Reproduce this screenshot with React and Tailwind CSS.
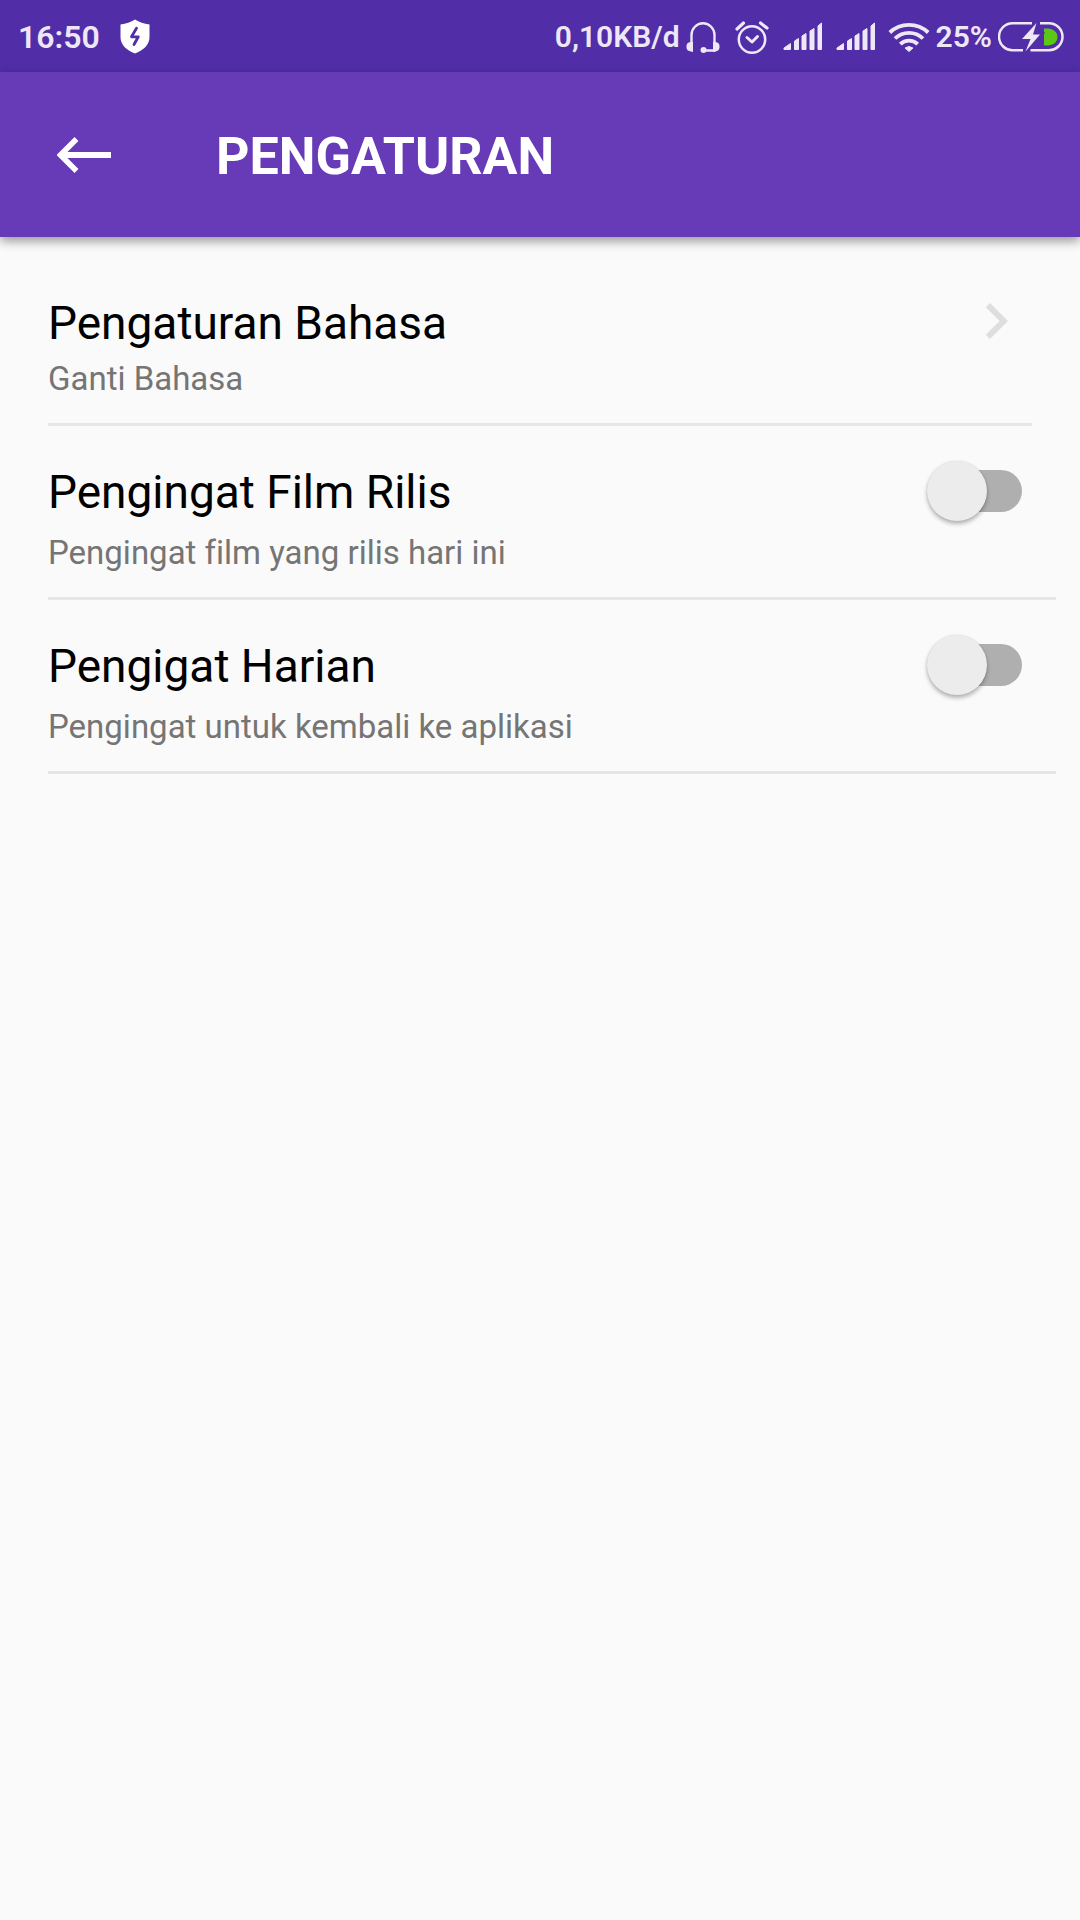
import { useState } from "react";

const ink = "#ede7f6";

function ShieldIcon() {
  return (
    <svg className="ml-5 h-9 w-[30px]" viewBox="0 0 30 36" aria-hidden="true">
      <path d="M15 .5C19 3 24 5 29.500 5.500V18c0 8-6.500 13.500-14.500 16.500C7 31.500.5 26 .5 18V5.500C6 5 11 3 15 .5z" fill="#fff" />
      <path d="M16.500 9.200l-5 8.600h6.800l-4.300 7.700" fill="none" stroke="#512da8" strokeWidth="2.800" strokeLinecap="round" strokeLinejoin="round" />
    </svg>
  );
}

function HeadsetIcon() {
  return (
    <svg className="ml-1.5 h-9 w-[34px]" viewBox="0 0 34 36" aria-hidden="true">
      <path d="M5.500 32V16a11.500 11.700 0 0 1 23 0v15.500H18" fill="none" stroke={ink} strokeWidth="2.400" />
      <path d="M7 23v10L4 32.200Q.5 31.500.5 28.500V27q0-3.500 4-4zM27 23v10l3-.8q3.500-.7 3.500-3.700V27q0-3.500-4-4z" fill={ink} />
      <circle cx="17.500" cy="31" r="3" fill={ink} />
    </svg>
  );
}

function AlarmIcon() {
  return (
    <svg className="ml-[15px] h-9 w-[34px]" viewBox="0 0 34 36" aria-hidden="true" fill="none" stroke={ink} strokeLinecap="round">
      <circle cx="17" cy="20.500" r="13.200" strokeWidth="2.500" />
      <path d="M12 18.500l5 4.500 5.500-5.500" strokeWidth="3" strokeLinejoin="round" />
      <path d="M2 10l6.500-6M32 9l-6.500-5" strokeWidth="3.200" />
    </svg>
  );
}

function SignalIcon({ className }) {
  return (
    <svg className={className} viewBox="0 0 40 36" aria-hidden="true" fill={ink} stroke={ink} strokeWidth="1" strokeLinejoin="round">
      <path d="M1 30.500V29l6.500-4.500v6zM11.500 30.500V22l4-2.500v11zM19 30.500V17l4-2.500v16zM27 30.500V12l4-2.500v21zM35 30.500V7l3.500-3v26.500z" />
    </svg>
  );
}

function WifiIcon() {
  return (
    <svg className="ml-3 h-9 w-[42px]" viewBox="0 0 42 36" aria-hidden="true" fill="none" stroke={ink} strokeWidth="3.800">
      <path d="M1.800 13.500a28 28 0 0 1 38.400 0" />
      <path d="M7 19.500a20 20 0 0 1 28 0" />
      <path d="M12.300 25.200a12.500 12.500 0 0 1 17.400 0" />
      <path d="M17 29q4-3 8 0l-4 3.500z" fill={ink} stroke={ink} strokeWidth="1" strokeLinejoin="round" />
    </svg>
  );
}

function BatteryIcon() {
  return (
    <svg className="ml-1.5 h-9 w-[66px]" viewBox="0 0 66 36" aria-hidden="true">
      <path d="M34 4.200H14.500a13.500 13.500 0 0 0 0 27H25M42 4.200h9a13.500 13.500 0 0 1 0 27H32.500" fill="none" stroke={ink} strokeWidth="2.500" />
      <path d="M46 9.500h4.500q9 1.500 9 8.500t-9 8.500H47q-1 0-1-1V15l1-1-1-1z" fill="#5ac814" />
      <path d="M38.500 4L24 20h8.500l-5 12.500L42 15.500h-7z" fill={ink} />
    </svg>
  );
}

function StatusBar() {
  return (
    <header className="flex h-[72px] items-center justify-between bg-[#512da8] pt-px pr-4 pl-[18px] text-[#ede7f6]">
      <div className="flex items-center">
        <span className="text-[32px] leading-9 font-semibold">16:50</span>
        <ShieldIcon />
      </div>
      <div className="flex items-center text-[30px] leading-9 font-semibold">
        <span>0,10KB/d</span>
        <HeadsetIcon />
        <AlarmIcon />
        <SignalIcon className="ml-3.5 h-9 w-10" />
        <SignalIcon className="ml-[13px] h-9 w-10" />
        <WifiIcon />
        <span className="ml-1.5">25%</span>
        <BatteryIcon />
      </div>
    </header>
  );
}

function Switch({ id, checked, onChange }) {
  return (
    <span className="relative flex h-[60px] w-[95px] shrink-0 items-center">
      <input
        id={id}
        type="checkbox"
        role="switch"
        checked={checked}
        onChange={(e) => onChange(e.target.checked)}
        className="peer absolute inset-0 z-10 cursor-pointer opacity-0"
      />
      <span className="ml-auto h-[42px] w-[84px] rounded-full bg-[#afafaf] peer-checked:bg-[#b39ddb]" />
      <span className="absolute top-0 left-0 size-[60px] rounded-full bg-[#ececec] shadow-[0_3px_4px_rgba(0,0,0,0.28),0_0_2px_rgba(0,0,0,0.12)] peer-checked:right-0 peer-checked:left-auto peer-checked:bg-[#673ab7]" />
    </span>
  );
}

function SwitchRow({ id, title, summary }) {
  const [on, setOn] = useState(false);
  return (
    <li className="mr-6 flex items-start justify-between border-b-[3px] border-[#e6e6e6] pt-[35px] pr-[34px] pb-6">
      <label htmlFor={id} className="mt-[3px]">
        <span className="block text-[46px] leading-[56px] text-black">{title}</span>
        <span className="mt-[13px] block text-[33px] leading-10 text-[#757575] [font-variant-ligatures:none]">{summary}</span>
      </label>
      <Switch id={id} checked={on} onChange={setOn} />
    </li>
  );
}

export default function App() {
  return (
    <div className="min-h-screen bg-[#fafafa] font-[Roboto,sans-serif]">
      <StatusBar />
      <div className="flex h-[165px] items-center bg-[#673ab7] pl-[57px] text-white shadow-[0_4px_10px_rgba(0,0,0,0.4)]">
        <button type="button" aria-label="Kembali" className="cursor-pointer">
          <svg className="h-9 w-[54px]" viewBox="0 0 54 36" aria-hidden="true" fill="none" stroke="#fff">
            <path d="M4 18h50" strokeWidth="6" />
            <path d="M19.500 2L3.500 18l16 16" strokeWidth="5.500" />
          </svg>
        </button>
        <h1 className="ml-[105px] pt-1 text-[52px] leading-[60px] font-bold">PENGATURAN</h1>
      </div>
      <main>
        <ul className="pl-12">
          <li className="mr-12 border-b-[3px] border-[#e6e6e6]">
            <button type="button" className="flex w-full cursor-pointer items-start justify-between pt-12 pb-6 text-left">
              <span className="mt-2.5">
                <span className="block text-[46px] leading-[56px] text-black">Pengaturan Bahasa</span>
                <span className="mt-2 block text-[33px] leading-10 text-[#757575] [font-variant-ligatures:none]">Ganti Bahasa</span>
              </span>
              <svg className="size-[72px] shrink-0" viewBox="0 0 24 24" aria-hidden="true" fill="#dedede">
                <path d="M10 6L8.590 7.410 13.170 12l-4.580 4.590L10 18l6-6z" />
              </svg>
            </button>
          </li>
          <SwitchRow id="release" title="Pengingat Film Rilis" summary="Pengingat film yang rilis hari ini" />
          <SwitchRow id="daily" title="Pengigat Harian" summary="Pengingat untuk kembali ke aplikasi" />
        </ul>
      </main>
    </div>
  );
}
